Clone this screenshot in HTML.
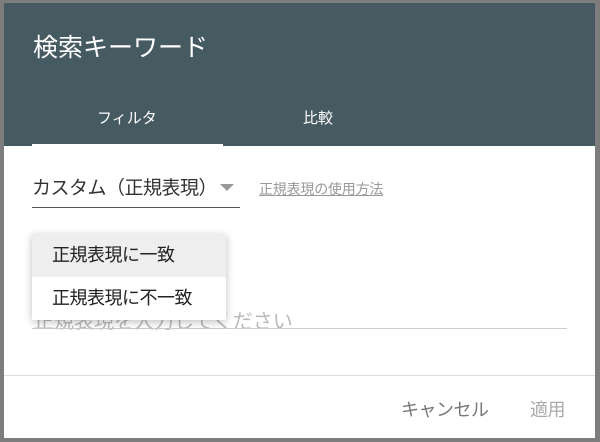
<!DOCTYPE html>
<html><head><meta charset="utf-8"><style>
*{margin:0;padding:0;box-sizing:border-box}
body{width:600px;height:442px;background:#7d7d7d;position:relative;overflow:hidden;font-family:"Liberation Sans","Noto Sans CJK JP",sans-serif}
.dlg{position:absolute;left:4px;top:3px;width:591px;height:435px;background:#fff}
.hd{position:absolute;left:0;top:0;width:591px;height:143px;background:#465a61}
.t{position:absolute;left:29px;top:25px;color:#fff;font-size:25px}
.tab{position:absolute;top:104px;color:#fff;font-size:15px}
.ind{position:absolute;left:28px;top:141px;width:191px;height:3px;background:#fff}
.sel{position:absolute;left:28px;top:170px;font-size:19px;color:#333;letter-spacing:-0.5px}
.selline{position:absolute;left:28px;top:204px;width:208px;height:1px;background:#555}
.arr{position:absolute;left:216px;top:181px;width:0;height:0;border-left:7px solid transparent;border-right:7px solid transparent;border-top:7px solid #999}
.link{position:absolute;left:255px;top:176px;font-size:14px;color:#999;text-decoration:underline;letter-spacing:-0.2px}
.ph{position:absolute;left:30px;top:302px;font-size:20px;color:#bbb}
.inline{position:absolute;left:28px;top:325px;width:535px;height:1px;background:#ccc}
.menu{position:absolute;left:28px;top:231px;width:194px;height:86px;background:#fff;box-shadow:0 2px 8px rgba(0,0,0,.25)}
.mi{height:43px;line-height:42px;padding-left:20px;font-size:18px;color:#222;letter-spacing:-0.5px}
.sep{position:absolute;left:0;top:372px;width:591px;height:1px;background:#ddd}
.btn{position:absolute;top:393px;font-size:18px;color:#888;letter-spacing:-0.5px}
</style></head><body>
<div class="dlg">
<div class="hd">
<div class="t">検索キーワード</div>
<div class="tab" style="left:93px">フィルタ</div>
<div class="tab" style="left:299px">比較</div>
<div class="ind"></div>
</div>
<div class="sel">カスタム（正規表現）</div>
<div class="arr"></div>
<div class="selline"></div>
<div class="link">正規表現の使用方法</div>
<div class="ph">正規表現を入力してください</div>
<div class="inline"></div>
<div class="menu"><div class="mi" style="background:#eee">正規表現に一致</div><div class="mi">正規表現に不一致</div></div>
<div class="sep"></div>
<div class="btn" style="left:397px;color:#777">キャンセル</div>
<div class="btn" style="left:526px;color:#aaa">適用</div>
</div>
</body></html>
